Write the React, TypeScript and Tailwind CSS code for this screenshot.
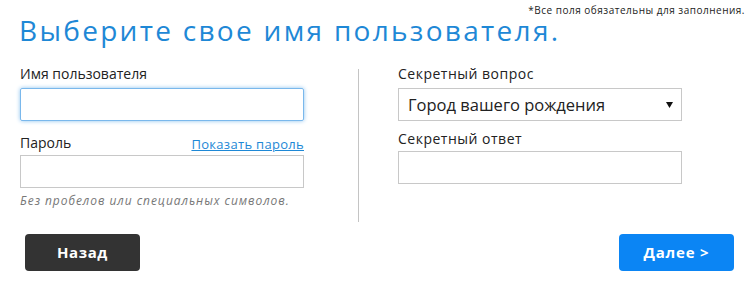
import React from "react";

export default function App() {
  const font = { fontFamily: '"Open Sans", "Noto Sans", sans-serif' };
  return (
    <div className="w-[750px] h-[282px] bg-white overflow-hidden text-[#333]" style={font}>
      <div className="relative h-[62px]">
        <h1 className="pl-[19px] pt-[16px] text-[28px] leading-[28px] font-normal text-[#1e88d6] tracking-[2.3px] whitespace-nowrap">
          Выберите свое имя пользователя.
        </h1>
        <div className="absolute top-[5px] right-[5px] text-[10px] leading-[10px] text-[#222] tracking-[0.5px] whitespace-nowrap">
          *Все поля обязательны для заполнения.
        </div>
      </div>
      <div className="flex items-start pl-[20px]">
        <div className="w-[284px] flex flex-col">
          <label className="text-[14px] leading-[20px] h-[20px] text-[#222] mt-[2px]">Имя пользователя</label>
          <input className="mt-[4px] h-[33px] w-full border border-[#7ab8ec] rounded-[2px] shadow-[0_0_4px_#8cc3ef] outline-none" />
          <div className="mt-[12px] flex justify-between items-end h-[20px]">
            <span className="text-[14px] leading-[20px] text-[#222]">Пароль</span>
            <a className="text-[13px] leading-[18px] text-[#1e88d6] underline tracking-[0.3px]">Показать пароль</a>
          </div>
          <input className="mt-[2px] h-[33px] w-full border border-[#c8c8c8] outline-none" />
          <div className="mt-[5px] text-[12px] leading-[16px] italic text-[#777] tracking-[0.95px] whitespace-nowrap">
            Без пробелов или специальных символов.
          </div>
        </div>
        <div className="ml-[54px] mt-[7px] w-px h-[153px] bg-[#c4c4c4]" />
        <div className="ml-[39px] w-[284px] flex flex-col">
          <label className="text-[14px] leading-[20px] h-[20px] text-[#222] mt-[2px] tracking-[0.5px]">Секретный вопрос</label>
          <div className="mt-[4px] h-[33px] w-full border border-[#c8c8c8] flex items-center justify-between pl-[9px] pr-[8px]">
            <span className="text-[16.5px] leading-[20px] text-[#222]">Город вашего рождения</span>
            <svg width="7" height="6" viewBox="0 0 7 6"><path d="M0 0H7L3.5 6Z" fill="#111" /></svg>
          </div>
          <label className="mt-[8px] text-[14px] leading-[20px] h-[20px] text-[#222] tracking-[0.5px]">Секретный ответ</label>
          <input className="mt-[2px] h-[33px] w-full border border-[#c8c8c8] outline-none" />
        </div>
      </div>
      <div className="flex justify-between pl-[25px] pr-[16px] mt-[12px]">
        <button className="w-[115px] h-[37px] rounded-[4px] bg-[#333333] text-white font-bold text-[15px] tracking-[0.6px]">Назад</button>
        <button className="w-[115px] h-[37px] rounded-[4px] bg-[#0b85f4] text-white font-bold text-[15px] tracking-[0.8px]">Далее &gt;</button>
      </div>
    </div>
  );
}
